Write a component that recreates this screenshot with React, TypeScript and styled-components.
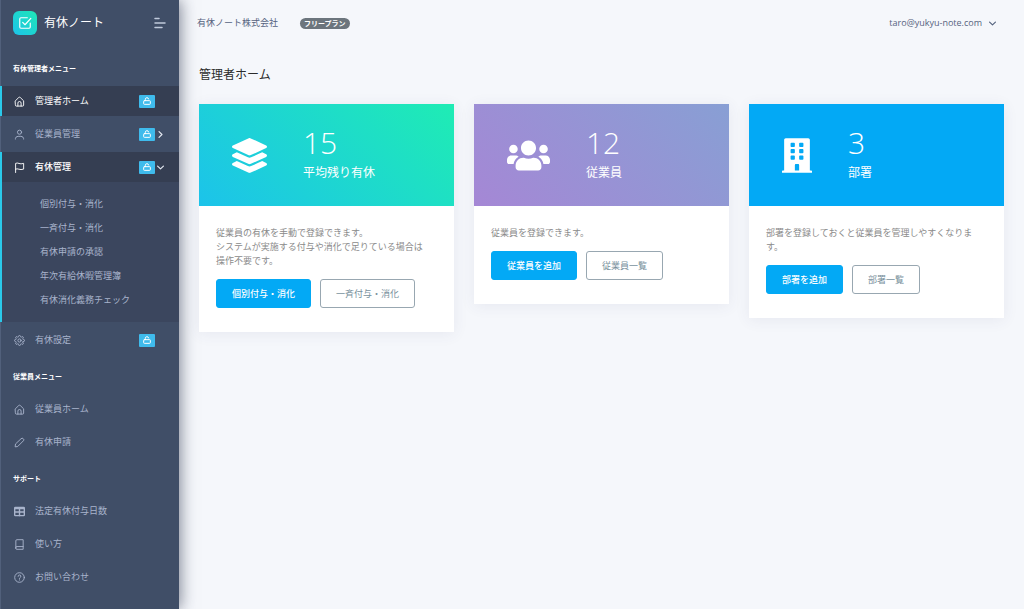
import React from 'react';
import styled, { createGlobalStyle, css } from 'styled-components';
import { FaLayerGroup, FaUsers, FaBuilding } from 'react-icons/fa';

const GlobalStyle = createGlobalStyle`
  *, *::before, *::after { box-sizing: border-box; }
  body {
    margin: 0;
    background: #f5f7fb;
    color: #2b2b2b;
    font-family: "Open Sans", "Noto Sans CJK JP", sans-serif;
    font-size: 9px;
    line-height: 14px;
  }
  h1, h2, p, ul { margin: 0; padding: 0; }
  ul { list-style: none; }
  a { color: inherit; text-decoration: none; }
  button { font: inherit; color: inherit; cursor: pointer; }
`;

const Layout = styled.div`
  display: flex;
  min-height: 100vh;
`;

const Sidebar = styled.nav`
  flex: 0 0 179px;
  background: linear-gradient(to right, #51607b 1px, #404e67 1px);
  color: #a9b4cc;
  box-shadow: 1px 0 15px rgba(34, 42, 66, 0.6);
`;

const BrandBar = styled.div`
  display: flex;
  align-items: center;
  height: 47px;
  padding: 0 13px 1px;
`;

const Brand = styled.a`
  display: flex;
  align-items: center;
  gap: 7px;
  color: #fff;
  font-size: 12px;
  flex: 1;
`;

const Logo = styled.span`
  display: flex;
  align-items: center;
  justify-content: center;
  width: 24px;
  height: 24px;
  border-radius: 6px;
  color: #fff;
  background: linear-gradient(45deg, #1cc3ea, #1fe6b6);
`;

const IconButton = styled.button`
  display: flex;
  padding: 0;
  border: 0;
  background: none;
  color: #c0cadc;
`;

const MenuHeading = styled.h2`
  padding: 16px 13px 12px;
  color: #fff;
  font-size: 7px;
  line-height: 11px;
  font-weight: 700;
`;

const MenuList = styled.ul`
  display: flex;
  flex-direction: column;
  gap: 3px;
`;

const MenuItem = styled.li<{ $active?: boolean }>`
  ${(p) =>
    p.$active &&
    css`
      border-left: 2px solid #2ac9ea;
      background: #3b465e;
    `}
`;

const MenuLink = styled.a<{ $active?: boolean; $open?: boolean }>`
  display: flex;
  align-items: center;
  height: 30px;
  padding: 0 14px;
  ${(p) =>
    p.$active &&
    css`
      padding-left: 12px;
      color: #fff;
      background: #353e52;
    `}
  ${(p) => p.$open && 'font-weight: 500;'}
`;

const MenuIcon = styled.span`
  display: flex;
  width: 21px;
`;

const MenuLabel = styled.span`
  flex: 1;
`;

const LockBadge = styled.span`
  display: flex;
  align-items: center;
  justify-content: center;
  width: 16px;
  height: 13px;
  border-radius: 1px;
  color: #fff;
  background: #3fbbec;
`;

const Caret = styled.span`
  display: flex;
  justify-content: center;
  width: 10px;
  color: #e4e9f2;
`;

const SubMenu = styled.ul`
  padding: 10px 0 10px 38px;
  line-height: 24px;
`;

const Main = styled.main`
  flex: 1;
  min-width: 0;
`;

const TopBar = styled.header`
  display: flex;
  align-items: center;
  height: 46px;
  padding: 0 28px 0 18px;
  color: #55637f;
`;

const PlanBadge = styled.span`
  margin-left: 22px;
  padding: 0 4px;
  border-radius: 6px;
  background: #6c757d;
  color: #fff;
  font-size: 7px;
  line-height: 11px;
  font-weight: 700;
`;

const UserButton = styled.button`
  display: flex;
  align-items: center;
  gap: 7px;
  margin-left: auto;
  padding: 0;
  border: 0;
  background: none;
`;

const Content = styled.div`
  padding: 19px 20px;
`;

const PageTitle = styled.h1`
  font-size: 12px;
  line-height: 20px;
  font-weight: 400;
  margin-bottom: 19px;
`;

const CardGrid = styled.div`
  display: grid;
  grid-template-columns: repeat(3, minmax(0, 1fr));
  gap: 20px;
  align-items: start;
`;

const Card = styled.section`
  background: #fff;
  box-shadow: 0 2px 14px rgba(60, 70, 110, 0.08);
`;

const CardBanner = styled.div<{ $background: string }>`
  display: flex;
  align-items: center;
  gap: 36px;
  height: 102px;
  padding-left: 33px;
  color: #fff;
  background: ${(p) => p.$background};
`;

const BannerIcon = styled.span<{ $width: number }>`
  display: flex;
  svg {
    width: ${(p) => p.$width}px;
    height: 35px;
  }
`;

const Figure = styled.div`
  font-size: 30px;
  line-height: 36px;
  font-weight: 300;
`;

const FigureLabel = styled.div`
  font-size: 12px;
  line-height: 24px;
`;

const CardBody = styled.div`
  padding: 20px 17px 24px;
`;

const Description = styled.p`
  max-width: 23em;
  margin-bottom: 11px;
  color: #8a8a8a;
`;

const Actions = styled.div`
  display: flex;
  gap: 9px;
`;

const ActionButton = styled.button<{ $primary?: boolean }>`
  height: 29px;
  padding: 0 15px;
  border: 1px solid ${(p) => (p.$primary ? '#03a9f5' : '#98a7b1')};
  border-radius: 3px;
  background: ${(p) => (p.$primary ? '#03a9f5' : '#fff')};
  color: ${(p) => (p.$primary ? '#fff' : '#78909c')};
  white-space: nowrap;
  ${(p) => p.$primary && 'font-weight: 500;'}
`;

const paths = {
  home: (
    <>
      <path d="M3 10.5 10.2 3.4a2.6 2.6 0 0 1 3.6 0L21 10.5V20a2 2 0 0 1-2 2H5a2 2 0 0 1-2-2z" />
      <path d="M8.5 22v-6.5a3.5 3.5 0 0 1 7 0V22" />
    </>
  ),
  user: (
    <>
      <circle cx="12" cy="7" r="4.500" />
      <path d="M3 22v-1a6 6 0 0 1 6-5h6a6 6 0 0 1 6 5v1" />
    </>
  ),
  flag: <path d="M3.500 23V3c5-3 9 3.500 17.500 0v12.500c-8.500 3.500-12.500-3-17.500 0" />,
  gear: (
    <>
      <circle cx="12" cy="12" r="3.500" />
      <path d="M19.400 15a1.650 1.650 0 0 0 .33 1.820l.06.06a2 2 0 0 1-2.830 2.830l-.06-.06a1.650 1.650 0 0 0-2.820 1.170V21a2 2 0 0 1-4 0v-.09a1.650 1.650 0 0 0-2.900-1.260l-.06.06a2 2 0 0 1-2.830-2.830l.06-.06A1.650 1.650 0 0 0 3.090 14H3a2 2 0 0 1 0-4h.09a1.650 1.650 0 0 0 1.260-2.900l-.06-.06a2 2 0 0 1 2.830-2.830l.06.06A1.650 1.650 0 0 0 10 3.090V3a2 2 0 0 1 4 0v.09a1.650 1.650 0 0 0 2.820 1.170l.06-.06a2 2 0 0 1 2.830 2.830l-.06.06A1.650 1.650 0 0 0 20.910 10H21a2 2 0 0 1 0 4h-.09a1.650 1.650 0 0 0-1.510 1z" />
    </>
  ),
  pencil: <path d="M15.800 3.400a2.800 2.800 0 0 1 4 0l.8.8a2.800 2.800 0 0 1 0 4L8 20.800 2.500 21.500l.7-5.500z" />,
  table: (
    <>
      <rect x="1.500" y="3" width="21" height="18" rx="1.500" />
      <path d="M1.500 5.500h21M1.500 13h21M12 5v16" />
    </>
  ),
  book: (
    <>
      <path d="M4 19.500V4a2.500 2.500 0 0 1 2.500-2.500H20v21H6.500a2.500 2.500 0 0 1 0-6H20" />
    </>
  ),
  help: (
    <>
      <circle cx="12" cy="12" r="10.500" />
      <path d="M9 9.500a3 3 0 1 1 4.300 2.700c-.9.400-1.300 1-1.300 1.900M12 17v.6" />
    </>
  ),
  lock: (
    <>
      <rect x="2" y="11" width="20" height="11" rx="2" />
      <path d="M7 11V7a5 5 0 0 1 9.900-1" />
    </>
  ),
  right: <path d="m7 2 10 10L7 22" />,
  down: <path d="m2 7 10 10L22 7" />,
  check: (
    <>
      <path d="m8 11 4 4L22 4" />
      <path d="M21 12v7a2 2 0 0 1-2 2H5a2 2 0 0 1-2-2V5a2 2 0 0 1 2-2h11" />
    </>
  ),
  menu: <path d="M2 3h8M2 12h20M2 21h14" />,
};

type IconName = keyof typeof paths;

const Icon = ({ name, size = 11, stroke = 2 }: { name: IconName; size?: number; stroke?: number }) => (
  <svg
    width={size}
    height={size}
    viewBox="0 0 24 24"
    fill="none"
    stroke="currentColor"
    strokeWidth={stroke}
    strokeLinecap="round"
    strokeLinejoin="round"
    aria-hidden="true"
  >
    {paths[name]}
  </svg>
);

type Entry = {
  label: string;
  icon: IconName;
  iconStroke?: number;
  active?: boolean;
  locked?: boolean;
  caret?: 'right' | 'down';
  children?: string[];
};

const menu: { heading: string; items: Entry[] }[] = [
  {
    heading: '有休管理者メニュー',
    items: [
      { label: '管理者ホーム', icon: 'home', active: true, locked: true },
      { label: '従業員管理', icon: 'user', locked: true, caret: 'right' },
      {
        label: '有休管理',
        icon: 'flag',
        active: true,
        locked: true,
        caret: 'down',
        children: ['個別付与・消化', '一斉付与・消化', '有休申請の承認', '年次有給休暇管理簿', '有休消化義務チェック'],
      },
      { label: '有休設定', icon: 'gear', locked: true },
    ],
  },
  {
    heading: '従業員メニュー',
    items: [
      { label: '従業員ホーム', icon: 'home' },
      { label: '有休申請', icon: 'pencil' },
    ],
  },
  {
    heading: 'サポート',
    items: [
      { label: '法定有休付与日数', icon: 'table', iconStroke: 3 },
      { label: '使い方', icon: 'book' },
      { label: 'お問い合わせ', icon: 'help' },
    ],
  },
];

const cards = [
  {
    icon: <FaLayerGroup />,
    iconWidth: 35,
    background: 'linear-gradient(45deg, #1cc3ea, #1fecb4)',
    figure: '15',
    label: '平均残り有休',
    text: ['従業員の有休を手動で登録できます。', 'システムが実施する付与や消化で足りている場合は操作不要です。'],
    primary: '個別付与・消化',
    secondary: '一斉付与・消化',
  },
  {
    icon: <FaUsers />,
    iconWidth: 43,
    background: 'linear-gradient(45deg, #a587d5, #889fd4)',
    figure: '12',
    label: '従業員',
    text: ['従業員を登録できます。'],
    primary: '従業員を追加',
    secondary: '従業員一覧',
  },
  {
    icon: <FaBuilding />,
    iconWidth: 30,
    background: '#03a9f5',
    figure: '3',
    label: '部署',
    text: ['部署を登録しておくと従業員を管理しやすくなります。'],
    primary: '部署を追加',
    secondary: '部署一覧',
  },
];

export default function App() {
  return (
    <>
      <GlobalStyle />
      <Layout lang="ja">
        <Sidebar>
          <BrandBar>
            <Brand href="#">
              <Logo>
                <Icon name="check" size={14} />
              </Logo>
              有休ノート
            </Brand>
            <IconButton type="button" aria-label="メニュー">
              <Icon name="menu" size={12} stroke={3} />
            </IconButton>
          </BrandBar>
          {menu.map((group) => (
            <React.Fragment key={group.heading}>
              <MenuHeading>{group.heading}</MenuHeading>
              <MenuList>
                {group.items.map((item) => (
                  <MenuItem key={item.label} $active={item.active}>
                    <MenuLink href="#" $active={item.active} $open={Boolean(item.children)}>
                      <MenuIcon>
                        <Icon name={item.icon} stroke={item.iconStroke} />
                      </MenuIcon>
                      <MenuLabel>{item.label}</MenuLabel>
                      {item.locked && (
                        <LockBadge>
                          <Icon name="lock" size={8} stroke={3} />
                        </LockBadge>
                      )}
                      {item.locked && (
                        <Caret>{item.caret && <Icon name={item.caret} size={7} stroke={4} />}</Caret>
                      )}
                    </MenuLink>
                    {item.children && (
                      <SubMenu>
                        {item.children.map((child) => (
                          <li key={child}>
                            <a href="#">{child}</a>
                          </li>
                        ))}
                      </SubMenu>
                    )}
                  </MenuItem>
                ))}
              </MenuList>
            </React.Fragment>
          ))}
        </Sidebar>
        <Main>
          <TopBar>
            <span>有休ノート株式会社</span>
            <PlanBadge>フリープラン</PlanBadge>
            <UserButton type="button">
              taro@yukyu-note.com
              <Icon name="down" size={7} stroke={4} />
            </UserButton>
          </TopBar>
          <Content>
            <PageTitle>管理者ホーム</PageTitle>
            <CardGrid>
              {cards.map((card) => (
                <Card key={card.label}>
                  <CardBanner $background={card.background}>
                    <BannerIcon $width={card.iconWidth}>{card.icon}</BannerIcon>
                    <div>
                      <Figure>{card.figure}</Figure>
                      <FigureLabel>{card.label}</FigureLabel>
                    </div>
                  </CardBanner>
                  <CardBody>
                    <Description>
                      {card.text.map((line, i) => (
                        <React.Fragment key={line}>
                          {i > 0 && <br />}
                          {line}
                        </React.Fragment>
                      ))}
                    </Description>
                    <Actions>
                      <ActionButton type="button" $primary>
                        {card.primary}
                      </ActionButton>
                      <ActionButton type="button">{card.secondary}</ActionButton>
                    </Actions>
                  </CardBody>
                </Card>
              ))}
            </CardGrid>
          </Content>
        </Main>
      </Layout>
    </>
  );
}
